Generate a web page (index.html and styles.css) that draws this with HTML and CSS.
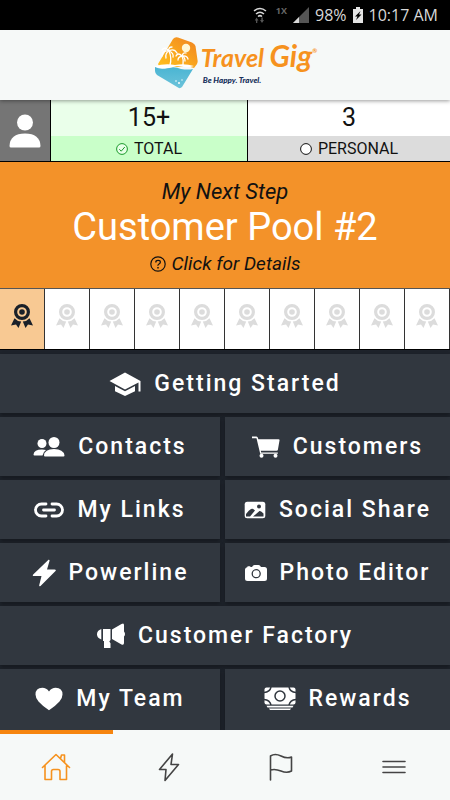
FILE: index.html
```html
<!DOCTYPE html>
<html lang="en">
<head>
<meta charset="utf-8">
<meta name="viewport" content="width=device-width, initial-scale=1">
<title>Travel Gig</title>
<link rel="stylesheet" href="styles.css">
</head>
<body>
<svg class="defs" aria-hidden="true">
  <symbol id="award" viewBox="0 0 24 26">
    <path fill="currentColor" fill-rule="evenodd" d="M12 1a8 8 0 1 1 0 16 8 8 0 0 1 0-16zm0 3.200a4.800 4.800 0 1 0 0 9.600 4.800 4.800 0 0 0 0-9.600z"/>
    <circle cx="12" cy="9" r="2.800" fill="currentColor"/>
    <path fill="currentColor" d="M4.500 15.200Q7 18.200 11.200 18.500L8.500 25 6 21.600 1 22.500zM19.500 15.200Q17 18.200 12.800 18.500L15.500 25 18 21.600 23 22.500z"/>
  </symbol>
</svg>

<div class="status">
  <svg class="wifi" viewBox="0 0 16 18" aria-hidden="true"><g fill="none" stroke="#d8d8d8" stroke-width="1.500"><path d="M2 5Q8 0 14 5M4 8Q8 4.500 12 8M6 10.500Q8 8.800 10 10.500"/></g><path d="M4.500 11.500l2 3h-1.200v2.500H4v-2.500H2.800zM10 17l2-3h-1.200v-2.500H9.300V14H8z" fill="#555"/></svg>
  <span class="net">1X</span>
  <svg class="signal" viewBox="0 0 16 16" aria-hidden="true"><path d="M16 0v16H0z" fill="#555"/><path d="M6 10v6H0z" fill="#d8d8d8"/></svg>
  <span>98%</span>
  <svg class="battery" viewBox="0 0 10 16" aria-hidden="true"><path d="M3 0h4v2h3v14H0V2h3z" fill="#e4e4e4"/><path d="M7.500 4L2 9.500h2.500L3 13l5.500-5.500H6z" fill="#000"/></svg>
  <span>10:17 AM</span>
</div>

<header class="header">
  <a class="logo" href="#" aria-label="Travel Gig home">
    <svg class="mark" viewBox="0 0 46 52" aria-hidden="true">
      <defs>
        <linearGradient id="sky" x1="0" y1="1" x2="1" y2="0"><stop offset="0" stop-color="#ffc21f"/><stop offset=".5" stop-color="#f9a51d"/><stop offset="1" stop-color="#ef8122"/></linearGradient>
        <linearGradient id="sea" x1="0" y1="0" x2="0" y2="1"><stop offset="0" stop-color="#4ab5d3"/><stop offset="1" stop-color="#6cc3da"/></linearGradient>
      </defs>
      <path d="M20 2Q22-.5 25 .5l14 5Q42 7 42.500 9L44.500 23Q45 25 44 27L41 31Q34 28 24 30 14 28 6 29L5 27z" fill="url(#sky)"/>
      <path d="M2 30Q8 33 14 31q8-2 14 1 7 1 12 0L29 50q-2 2-4 .5L4 38Q2 36 2 34z" fill="url(#sea)"/>
      <circle cx="33" cy="11" r="4.200" fill="#fff7d5"/>
      <g fill="none" stroke="#fff" stroke-linecap="round" stroke-width="1.300">
        <path d="M17 28q2-7-1-14M30 28q1-5-1-9"/>
        <path d="M16 14q-4-5-7-1M16 14q-7-1-7 5M16 14q-4 2-3 7M16 14q-1-4 3-4M16 14q5-3 8 2M16 14q5 2 4 6M29 19q-4-4-6 0M29 19q-4 1-4 4M29 19q1-4 4-3M29 19q5-1 6 3M29 19q3 1 3 5"/>
      </g>
      <path d="M1 29.500Q12 26 22 28q10-2 19 1-6 2-10 1-6-2-11 0-8 3-19-.5z" fill="#fff"/>
      <g fill="#fff"><circle cx="23" cy="44" r=".8"/><circle cx="26" cy="46" r="1"/><circle cx="29" cy="43" r=".7"/></g>
    </svg>
    <span class="words">
      <span class="name">Travel <span class="big">Gig</span><sup>®</sup></span>
      <span class="tag">Be Happy. Travel.</span>
    </span>
  </a>
</header>

<main>
  <section class="stats">
    <button class="avatar" type="button" aria-label="Profile">
      <svg viewBox="0 0 32 34" aria-hidden="true"><circle cx="16" cy="8.500" r="8" fill="#fff"/><path d="M.5 32Q1 19.500 16 19.500T31.500 32q0 1.500-1.500 1.500H2Q.5 33.500.5 32z" fill="#fff"/></svg>
    </button>
    <button class="stat total" type="button">
      <span class="num">15+</span>
      <span class="label"><svg viewBox="0 0 12 12" aria-hidden="true"><circle cx="6" cy="6" r="5.400" fill="#e8ffe8" stroke="#1b9a2b"/><path d="M3.300 6.200l1.900 2L8.800 4" fill="none" stroke="#1b9a2b"/></svg>TOTAL</span>
    </button>
    <button class="stat personal" type="button">
      <span class="num">3</span>
      <span class="label"><svg viewBox="0 0 12 12" aria-hidden="true"><circle cx="6" cy="6" r="5.400" fill="#fff" stroke="#111"/></svg>PERSONAL</span>
    </button>
  </section>

  <a class="step" href="#">
    <span class="next">My Next Step</span>
    <span class="goal">Customer Pool #2</span>
    <span class="details"><svg viewBox="0 0 16 16" fill="none" stroke="currentColor" aria-hidden="true"><circle cx="8" cy="8" r="7.200" stroke-width="1.200"/><path d="M5.800 6.400Q5.800 4.300 8.100 4.300T10.300 6.200Q10.300 7.200 9 8T8 9.700" stroke-width="1.300"/><path d="M8 11v1.500" stroke-width="1.500"/></svg>Click for Details</span>
  </a>

  <div class="badges">
    <span class="on"><svg><use href="#award"/></svg></span>
    <span><svg><use href="#award"/></svg></span>
    <span><svg><use href="#award"/></svg></span>
    <span><svg><use href="#award"/></svg></span>
    <span><svg><use href="#award"/></svg></span>
    <span><svg><use href="#award"/></svg></span>
    <span><svg><use href="#award"/></svg></span>
    <span><svg><use href="#award"/></svg></span>
    <span><svg><use href="#award"/></svg></span>
    <span><svg><use href="#award"/></svg></span>
  </div>

  <div class="menu">
    <button class="wide" type="button"><svg width="32" height="24" viewBox="0 0 32 24" fill="#fff" aria-hidden="true"><path d="M16 .5L31.500 9v10.500h-2V10.500L16 17.500.5 9z"/><path d="M6 14l10 5.300L26 14v5.200L16 24 6 19.200z"/></svg>Getting Started</button>
    <button type="button"><svg width="32" height="20" viewBox="0 0 32 20" fill="#fff" aria-hidden="true"><circle cx="21" cy="5.500" r="5.500"/><circle cx="9" cy="6.500" r="4.500"/><path d="M11 18.500Q11.500 12 21 12t10.500 6.500q0 1-1 1H12q-1 0-1-1z"/><path d="M.5 17.500Q1 12.500 9 12.500q2 0 4 .5-3 2-3.500 5.500h-8q-1 0-1-1z"/></svg>Contacts</button>
    <button type="button"><svg width="28" height="22" viewBox="0 0 28 22" fill="#fff" aria-hidden="true"><path d="M0 .5h4.500Q5.500.5 6 2l.3 1.200h20.200q1.300 0 1 1.300l-1.600 9.300q-.2 1-1.300 1H8.800l.4 1.600h16.600v1.400H8.200L4.500 2.200H0z"/><circle cx="9.500" cy="19.800" r="2"/><circle cx="23.500" cy="19.800" r="2"/></svg>Customers</button>
    <button type="button"><svg width="30" height="16" viewBox="0 0 30 16" fill="none" stroke="#fff" stroke-width="2.800" stroke-linecap="round" aria-hidden="true"><path d="M12 2H7.500a6 6 0 0 0 0 12H12M18 2h4.500a6 6 0 0 1 0 12H18M9.500 8h11"/></svg>My Links</button>
    <button type="button"><svg width="22" height="18" viewBox="0 0 22 18" aria-hidden="true"><rect x=".7" y=".7" width="20.600" height="16.600" rx="2.500" fill="#fff"/><circle cx="15" cy="5.500" r="2" fill="#31373f"/><path d="M2 13Q5 9 7 8t4 1.500L6 15.500H2zM9 15.500L15.500 10Q17 9.500 19.500 12.500v3z" fill="#31373f"/></svg>Social Share</button>
    <button type="button"><svg width="24" height="28" viewBox="1 0 24 28" fill="#fff" aria-hidden="true"><path d="M17.500.8Q18.800.5 18.500 2L16 10.500h7.500q2 0 1 1.500L9.500 27q-1.500 1-1.300-.8L10.500 17H3q-2 0-.8-1.600z"/></svg>Powerline</button>
    <button type="button"><svg width="22" height="16" viewBox="0 0 22 16" aria-hidden="true"><path d="M2.500 2V1.200h2.800V2H7q1-2 2.500-2h4Q15 0 16 2h3.500Q22 2 22 4.500v9q0 2.500-2.500 2.500h-17Q0 16 0 13.500v-9Q0 2.500 2.500 2z" fill="#fff"/><circle cx="11.200" cy="8.700" r="4" fill="#fff" stroke="#31373f" stroke-width="1.300"/></svg>Photo Editor</button>
    <button class="wide" type="button"><svg width="28" height="26" viewBox="0 0 28 26" fill="#fff" aria-hidden="true"><path d="M4.300 6Q0 7.500 0 11.200T4.300 16.500z"/><path d="M6 6h7.500v11l-1.200 1.500 1.200 1.700V25H7V18H6z"/><path d="M15 6.500L24.500 1q2.500-1.500 2.500 1V8.500q1 1 1 2.500t-1 2.500V20q0 2.500-2.500 1.500L15 16z"/></svg>Customer Factory</button>
    <button class="last" type="button"><svg width="28" height="24" viewBox="0 0 28 24" fill="#fff" aria-hidden="true"><path d="M14 23.200Q8 19.500 3.500 14.500.5 11 .5 7.500.5 1 7.300.8 11.500.8 14 4.500 16.500.8 20.700.8 27.500 1 27.500 7.500q0 3.500-3 7Q20 19.500 14 23.200z"/></svg>My Team</button>
    <button class="last" type="button"><svg width="32" height="24" viewBox="0 0 32 24" aria-hidden="true"><rect x=".5" y=".5" width="31" height="17" rx="2" fill="#fff"/><g fill="none" stroke="#31373f" stroke-width="1.500"><circle cx="16" cy="9" r="5"/><path d="M0 5.500Q6 5 7 0M32 5.500Q26 5 25 0M0 12.500Q6 13 7 18M32 12.500Q26 13 25 18"/></g><path d="M2.500 18.700h27l-1 1.700h-25zM5 21.400h22l-1 1.700H6z" fill="#fff"/></svg>Rewards</button>
  </div>
</main>

<nav class="tabs">
  <a class="active" href="#" aria-label="Home"><svg width="30" height="28" viewBox="0 0 30 28" aria-hidden="true"><path d="M1.500 14.500L15 1.500l13.500 13M4 12.500V26.500h6.500V18.500q0-2 2-2h4.500q2 0 2 2v8H25.500V12.500M19.500 5.500l1-3.500h3v7.500"/></svg></a>
  <a href="#" aria-label="Power"><svg width="22" height="30" viewBox="0 0 22 30" aria-hidden="true"><path d="M14.500 2L1.500 17.500H8L7 28.500 20.500 12.500H13z"/></svg></a>
  <a href="#" aria-label="Goals"><svg width="24" height="28" viewBox="0 0 24 28" aria-hidden="true"><path d="M1.500 27V3Q6 0 12 3t10.500 1V18Q18 20.500 12 18T1.500 17"/></svg></a>
  <a href="#" aria-label="Menu"><svg width="24" height="16" viewBox="0 0 24 16" aria-hidden="true"><path d="M1 2.500h22M1 8h22M1 13.500h22"/></svg></a>
</nav>
</body>
</html>
```
FILE: styles.css
```css
* { box-sizing: border-box; }

body {
  margin: 0;
  min-height: 100vh;
  display: flex;
  flex-direction: column;
  background: #1e232b;
  color: #111;
  font-family: Roboto, "Liberation Sans", sans-serif;
}

button {
  border: 0;
  padding: 0;
  margin: 0;
  background: none;
  color: inherit;
  font: inherit;
}

a { color: inherit; text-decoration: none; }
svg { flex: none; }
.defs { position: absolute; width: 0; height: 0; }

.status {
  display: flex;
  align-items: center;
  justify-content: flex-end;
  gap: 6px;
  height: 30px;
  padding-right: 12px;
  background: #000;
  color: #d8d8d8;
  font-family: "Open Sans", sans-serif;
  font-size: 16px;
}
.wifi { width: 16px; height: 18px; }
.net { align-self: flex-start; margin: 4px 0 0 2px; color: #666; font-size: 9px; font-weight: 700; }
.signal { width: 16px; height: 16px; }
.battery { width: 10px; height: 16px; }

.header {
  display: flex;
  justify-content: center;
  height: 70px;
  padding-left: 20px;
  background: #f6f9f8;
  box-shadow: 0 1px 4px rgba(0, 0, 0, .4);
  position: relative;
}
.logo { display: flex; align-items: flex-start; padding-top: 7px; gap: 2px; }
.mark { width: 46px; height: 52px; }
.words { display: flex; flex-direction: column; }
.name {
  color: #f6921e;
  font-family: Lato, sans-serif;
  font-size: 25px;
  font-style: italic;
  font-weight: 700;
  line-height: 36px;
  white-space: nowrap;
}
.big { font-size: 30px; }
.name sup { font-size: 6px; line-height: 1; vertical-align: 14px; }
.tag { padding-left: 2px; color: #16305c; font: italic 900 8px/10px Lato, sans-serif; }

.stats {
  display: grid;
  grid-template-columns: 51px 197fr 202fr;
  height: 62px;
  border-bottom: 1px solid #000;
}
.avatar { display: flex; align-items: center; justify-content: center; background: #757575; border-right: 1px solid #000; }
.avatar svg { width: 32px; height: 34px; }
.stat { display: flex; flex-direction: column; }
.num { display: block; width: 100%; height: 36px; font-size: 25px; line-height: 36px; }
.label { display: flex; flex: 1; width: 100%; align-items: center; justify-content: center; gap: 6px; font-size: 16px; }
.label svg { width: 12px; height: 12px; }
.total { background: #eaffea; border-right: 1px solid #000; }
.total .label { background: #c9ffc9; }
.personal { background: #fff; }
.personal .label { background: #dcdcdc; }

.step {
  display: flex;
  flex-direction: column;
  align-items: center;
  height: 126px;
  padding-top: 16px;
  background: #f39229;
}
.next { font-size: 22px; font-style: italic; line-height: 28px; }
.goal { color: #fff; font-size: 38px; line-height: 42px; }
.details { display: flex; align-items: center; gap: 6px; font-size: 19px; font-style: italic; line-height: 32px; }
.details svg { width: 16px; height: 16px; }

.badges {
  display: grid;
  grid-template-columns: repeat(10, 1fr);
  height: 62px;
  border-top: 1px solid #555;
  border-bottom: 1px solid #000;
  background: #fff;
  color: #dcdcdc;
}
.badges span { display: flex; align-items: center; justify-content: center; border-right: 1px solid #333; }
.badges svg { width: 24px; height: 26px; margin-bottom: 6px; }
.badges .on { background: #f8c993; color: #1a2029; }

.menu {
  display: grid;
  grid-template-columns: 44fr 45fr;
  gap: 4px 5px;
  padding-top: 4px;
}
.menu button {
  display: flex;
  align-items: center;
  justify-content: center;
  gap: 13px;
  height: 59px;
  background: #31373f;
  box-shadow: 0 2px 4px rgba(0, 0, 0, .3);
  color: #fff;
  font-size: 23px;
  font-weight: 500;
  letter-spacing: 2px;
  white-space: nowrap;
}
.menu .wide { grid-column: 1 / -1; }
.menu .last { height: 61px; padding-bottom: 2px; }

.tabs {
  display: grid;
  grid-template-columns: repeat(4, 1fr);
  flex: 1;
  min-height: 70px;
  background: #f6f9f8;
  position: relative;
}
.tabs a { display: flex; align-items: center; justify-content: center; border-top: 4px solid transparent; color: #444; }
.tabs .active { border-color: #f6850f; color: #f6921e; }
.tabs path { fill: none; stroke: currentColor; stroke-width: 1.600; stroke-linecap: round; stroke-linejoin: round; }
```
